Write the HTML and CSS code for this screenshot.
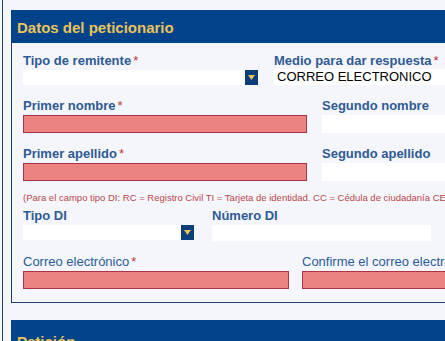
FILE: index.html
```html
<!DOCTYPE html>
<html lang="es">
<head>
<meta charset="utf-8">
<title>Datos del peticionario</title>
<link rel="stylesheet" href="styles.css">
</head>
<body>
<div class="page">
  <section class="panel">
    <h2 class="panel-head">Datos del peticionario</h2>
    <div class="panel-body">
      <div class="row row-1">
        <div class="field f-remitente">
          <label class="lbl">Tipo de remitente<span class="req">*</span></label>
          <div class="select"><span class="sel-btn"><svg width="7" height="5" viewBox="0 0 7 5"><path d="M0 0H7L3.5 5Z" fill="#e8c15a"/></svg></span></div>
        </div>
        <div class="field f-medio">
          <label class="lbl">Medio para dar respuesta<span class="req">*</span></label>
          <div class="value">CORREO ELECTRONICO</div>
        </div>
      </div>
      <div class="row row-2">
        <div class="field f-wide">
          <label class="lbl">Primer nombre<span class="req">*</span></label>
          <div class="input err"></div>
        </div>
        <div class="field f-rest">
          <label class="lbl">Segundo nombre</label>
          <div class="input"></div>
        </div>
      </div>
      <div class="row row-2">
        <div class="field f-wide">
          <label class="lbl">Primer apellido<span class="req">*</span></label>
          <div class="input err"></div>
        </div>
        <div class="field f-rest">
          <label class="lbl">Segundo apellido</label>
          <div class="input"></div>
        </div>
      </div>
      <p class="note">(Para el campo tipo DI: RC = Registro Civil TI = Tarjeta de identidad. CC = Cédula de ciudadanía CE = Cédula de extranjería)</p>
      <div class="row row-3">
        <div class="field f-tipodi">
          <label class="lbl">Tipo DI</label>
          <div class="select"><span class="sel-btn"><svg width="7" height="5" viewBox="0 0 7 5"><path d="M0 0H7L3.5 5Z" fill="#e8c15a"/></svg></span></div>
        </div>
        <div class="field f-numdi">
          <label class="lbl">Número DI</label>
          <div class="input plain"></div>
        </div>
      </div>
      <div class="row row-4">
        <div class="field f-correo">
          <label class="lbl light">Correo electrónico<span class="req">*</span></label>
          <div class="input err"></div>
        </div>
        <div class="field f-rest">
          <label class="lbl light">Confirme el correo electrónico<span class="req">*</span></label>
          <div class="input err"></div>
        </div>
      </div>
    </div>
  </section>
  <section class="panel panel-2">
    <h2 class="panel-head">Petición</h2>
  </section>
</div>
</body>
</html>
```
FILE: styles.css
```css
html, body {
  margin: 0;
  padding: 0;
  background: #f4f6fb;
  overflow: hidden;
}
body {
  font-family: "Liberation Sans", Arial, sans-serif;
  width: 445px;
  height: 341px;
}
.page {
  margin-left: 2px;
  border-left: 1px solid #1d3f6e;
  padding: 10px 0 0 8px;
  width: 560px;
  min-height: 400px;
}
.panel {
  border: 1px solid #1d3f6e;
  border-top: none;
  width: 540px;
  margin-left: 0;
}
.panel-head {
  margin: 0 0 0 -1px;
  background: #00438a;
  color: #e9c35b;
  font-size: 15px;
  font-weight: bold;
  height: 33px;
  line-height: 35px;
  padding-left: 6px;
}
.panel-body {
  padding: 10px 0 13px 11px;
}
.row {
  display: flex;
  align-items: flex-start;
}
.row-2, .row-4 {
  margin-top: 13px;
}
.row-3 {
  margin-top: 4px;
}
.field {
  display: flex;
  flex-direction: column;
}
.lbl {
  color: #2f5a94;
  font-size: 13px;
  font-weight: bold;
  line-height: 15px;
  height: 15px;
  white-space: nowrap;
}
.lbl.light {
  font-weight: normal;
  color: #2b5a98;
}
.req {
  color: #c2353a;
  margin-left: 2px;
  font-weight: normal;
}
.f-remitente { width: 235px; margin-right: 16px; }
.f-medio { flex: 1; }
.f-wide { width: 284px; margin-right: 15px; }
.f-rest { flex: 1; }
.f-tipodi { width: 171px; margin-right: 18px; }
.f-numdi { width: 219px; }
.f-correo { width: 266px; margin-right: 13px; }

.select {
  margin-top: 2px;
  height: 15px;
  background: #ffffff;
  display: flex;
  justify-content: flex-end;
}
.sel-btn {
  width: 13px;
  height: 15px;
  background: #0b3f7a;
  display: flex;
  align-items: center;
  justify-content: center;
}
.value {
  margin-top: 1px;
  height: 16px;
  background: #ffffff;
  color: #000;
  font-size: 13px;
  line-height: 16px;
  padding-left: 3px;
  white-space: nowrap;
}
.input {
  margin-top: 2px;
  height: 16px;
  background: #ffffff;
  border: 1px solid transparent;
}
.input.plain {
  height: 14px;
  border: 1px solid #ffffff;
}
.input.err {
  background: #ec8383;
  border-color: #a83444;
}
.note {
  margin: 11px 0 0 0;
  color: #b9464a;
  font-size: 9.5px;
  line-height: 12px;
  white-space: nowrap;
}
.panel-2 {
  margin-top: 17px;
}
.panel-2 .panel-head {
  height: 40px;
  line-height: 44px;
}
```
